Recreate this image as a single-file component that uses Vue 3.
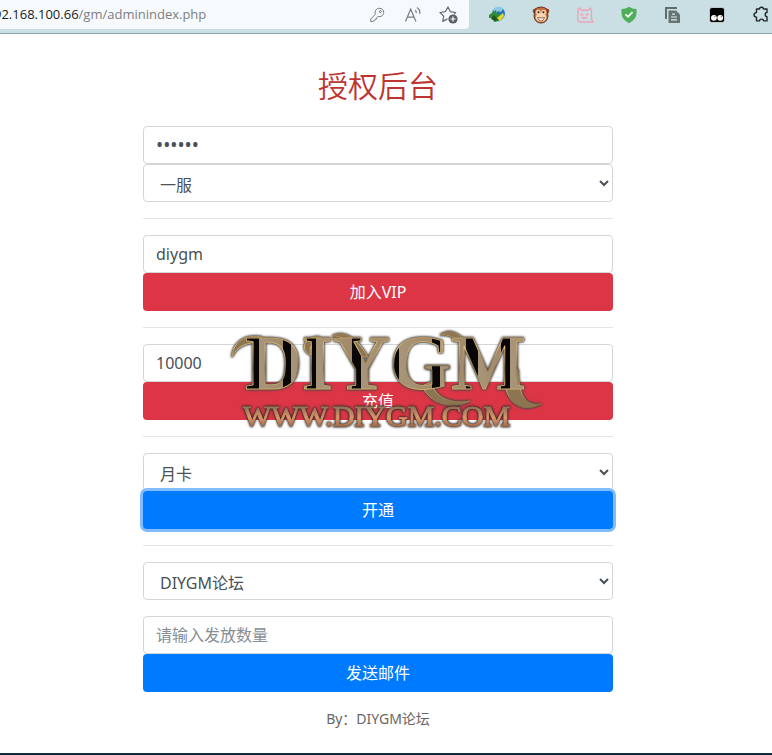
<template>
  <div class="window">
    <header class="toolbar">
      <div class="address">
        <a class="url" href="#"><span class="host">92.168.100.66</span>/gm/adminindex.php</a>
        <div class="tools">
          <button type="button" aria-label="密码">
            <svg width="16" height="16" viewBox="0 0 16 16" fill="none" stroke="#747b80">
              <path d="M6.300 7.300C5.500 4.200 7.200 1.300 10.200 1.300c2.700 0 4.500 1.700 4.500 4.200 0 3-2.800 4.700-5.700 3.900L7.800 10.700l-.2 1.300-1.500.2-.3 1.500-1.500.2-.5.600H1.700v-2.400z" />
              <circle cx="11.400" cy="4.600" r="1" />
            </svg>
          </button>
          <button type="button" aria-label="朗读">
            <svg width="18" height="18" viewBox="0 0 18 18" fill="none" stroke="#747b80" stroke-width="1.200">
              <path d="M1.500 15.500L6.700 3l5.200 12.500M3.300 11.200h6.800M11.200 4.200c1 .9 1.200 2 1 3M13 1.600c2.300 1.500 3.200 4 2.700 6.300" />
            </svg>
          </button>
          <button type="button" aria-label="收藏">
            <svg width="20" height="20" viewBox="0 0 20 20" fill="none">
              <path d="M8.500 13.900l-4.700 2.500.9-5.200L1 7.500l5.300-.8L9 2l2.400 4.700 5.300.8-1.700 1.700" stroke="#656c70" stroke-width="1.200" stroke-linejoin="round" />
              <circle cx="14" cy="14" r="4.600" fill="#596065" />
              <path d="M14 11.500v5M11.500 14h5" stroke="#fff" stroke-width="1.200" />
            </svg>
          </button>
        </div>
      </div>
      <nav class="extensions">
        <button type="button" aria-label="下载管理">
          <svg width="18" height="18" viewBox="0 0 18 18">
            <circle cx="10.500" cy="7.500" r="6.500" fill="#2673b8" />
            <path d="M5 4c3-4 8-4 10-1l-2 3-3-1-2 3z" fill="#8fc9e8" />
            <path d="M1 9l7-5 1 4 6 1c1 2-1 5-4 6l-5 1-1-4-4 0z" fill="#2f8d36" />
            <path d="M9 12l6-5 1 3-4 5z" fill="#e4d536" />
            <path d="M6 9l4 5-3 1-4-2z" fill="#25551f" />
          </svg>
        </button>
        <button type="button" aria-label="油猴">
          <svg width="18" height="18" viewBox="0 0 18 18">
            <circle cx="2.800" cy="5" r="2.200" fill="#9a4926" />
            <circle cx="15.200" cy="5" r="2.200" fill="#9a4926" />
            <path d="M3 3q6-4 12 0l1 7q-1 7-7 7t-7-7z" fill="#c56d3d" stroke="#69331f" />
            <circle cx="6.300" cy="6.300" r="2.500" fill="#f9cfaa" />
            <circle cx="11.700" cy="6.300" r="2.500" fill="#f9cfaa" />
            <ellipse cx="9" cy="11.500" rx="5.400" ry="4.200" fill="#f9d6b9" />
            <circle cx="6.500" cy="6.300" r="1" fill="#222" />
            <circle cx="11.500" cy="6.300" r="1" fill="#222" />
            <path d="M5.500 11.500q3.500 1 7 0-1 3.500-3.500 3.500t-3.500-3.500z" fill="#fff" stroke="#9a4926" stroke-width=".8" />
          </svg>
        </button>
        <button type="button" aria-label="小猫">
          <svg width="18" height="18" viewBox="0 0 18 18" fill="none" stroke="#eda4b7" stroke-width="1.400" stroke-linejoin="round" stroke-linecap="round">
            <path d="M2 8Q1.500 3 3.500 2L6 4.500q3-1 6 0L14.500 2Q16 4 15.500 8v5l1.500 3H5Q1.500 16 1.500 12z" />
            <path d="M4.800 9q1-1.400 2 0M10.200 9q1-1.400 2 0M6.500 11.500q1 1.400 2 0 1 1.400 2 0" />
          </svg>
        </button>
        <button type="button" aria-label="安全防护">
          <svg width="18" height="18" viewBox="0 0 18 18">
            <path d="M9 .8q3.500 2.400 7.500 2.200v5q-.6 5.500-7.500 9.200Q2.100 13.500 1.500 8V3Q5.500 3.200 9 .8z" fill="#4fae5a" />
            <path d="M5.500 8.300L8 10.800l4.500-4.700" fill="none" stroke="#fff" stroke-width="1.700" />
          </svg>
        </button>
        <button type="button" aria-label="复制文档">
          <svg width="18" height="18" viewBox="0 0 18 18">
            <path d="M1 1h12v2H3v10H1z" fill="#5f6d6d" />
            <path d="M4.500 4.500H12l4 4V17H4.500z" fill="#667474" />
            <path d="M8 8.200h3M7 11h6M7 13.800h6" stroke="#e0e9ea" stroke-width="1.200" />
          </svg>
        </button>
        <button type="button" aria-label="脚本管理">
          <svg width="18" height="18" viewBox="0 0 18 18">
            <rect x="1.500" y="1.500" width="15" height="15" rx="2.500" fill="#000" stroke="#fff" stroke-width=".6" />
            <circle cx="5.900" cy="11.800" r="2.900" fill="#fff" />
            <circle cx="12.200" cy="11.800" r="2.900" fill="#fff" />
            <circle cx="6.900" cy="10.800" r=".5" fill="#000" />
            <circle cx="13.200" cy="10.800" r=".5" fill="#000" />
          </svg>
        </button>
        <button type="button" aria-label="扩展">
          <svg width="18" height="18" viewBox="0 0 18 18" fill="none" stroke="#202426" stroke-width="1.400" stroke-linejoin="round">
            <path d="M4.500 3h3c0-2.400 4-2.400 4 0h3.500v3.500c-2.400 0-2.400 4.200 0 4.200v4.200h-3.400c0-2.400-4.100-2.400-4.100 0h-3v-3.800c-3.300 0-3.300-4.500 0-4.500z" />
          </svg>
        </button>
      </nav>
    </header>

    <main class="page">
      <form class="panel" @submit.prevent>
        <h1>授权后台</h1>

        <!-- 授权码与区服 -->
        <input v-model="form.code" class="control" type="password" aria-label="授权码" autocomplete="off">
        <select v-model="form.server" class="control" aria-label="区服">
          <option>一服</option>
        </select>
        <hr>

        <input v-model="form.account" class="control" type="text" aria-label="账号">
        <button class="btn btn-danger" type="button">加入VIP</button>
        <hr>

        <!-- 充值 -->
        <div class="recharge">
          <input v-model="form.amount" class="control" type="text" aria-label="充值数量">
          <button class="btn btn-danger" type="button">充值</button>
          <svg class="watermark" width="320" height="110" viewBox="0 0 320 110" aria-hidden="true">
            <defs>
              <!-- 左侧暗面、右侧石面交替 -->
              <linearGradient id="face" x1="0" y1="0" x2="320" y2="0" gradientUnits="userSpaceOnUse">
                <template v-for="band in bands" :key="band[0]">
                  <stop :offset="band[0] / 320" stop-color="#090705" />
                  <stop :offset="band[1] / 320" stop-color="#090705" />
                  <stop :offset="band[1] / 320" stop-color="#a8957a" />
                  <stop :offset="band[2] / 320" stop-color="#a08a6a" />
                </template>
              </linearGradient>
              <linearGradient id="gold" x1="0" y1="8" x2="0" y2="80" gradientUnits="userSpaceOnUse">
                <stop offset="0" stop-color="#a58350" />
                <stop offset=".2" stop-color="#e0bd7c" />
                <stop offset=".5" stop-color="#84704f" />
                <stop offset=".8" stop-color="#d0ad70" />
                <stop offset="1" stop-color="#8d7047" />
              </linearGradient>
              <linearGradient id="copper" x1="0" y1="84" x2="0" y2="103" gradientUnits="userSpaceOnUse">
                <stop offset="0" stop-color="#97765b" />
                <stop offset=".5" stop-color="#dc9669" />
                <stop offset="1" stop-color="#a16a48" />
              </linearGradient>
            </defs>
            <g class="brand">
              <path v-for="d in swashes" :key="d" :d="d" />
              <text x="17" y="65">DIYGM</text>
            </g>
            <text class="site" x="15" y="102">WWW.DIYGM.COM</text>
          </svg>
        </div>
        <hr>

        <select v-model="form.card" class="control" aria-label="会员卡">
          <option>月卡</option>
        </select>
        <button class="btn btn-primary active" type="button">开通</button>
        <hr>

        <!-- 邮件发放 -->
        <select v-model="form.item" class="control item" aria-label="物品">
          <option>DIYGM论坛</option>
        </select>
        <input v-model="form.count" class="control" type="text" placeholder="请输入发放数量" aria-label="发放数量">
        <button class="btn btn-primary" type="button">发送邮件</button>

        <p class="author">By：DIYGM论坛</p>
      </form>
    </main>
  </div>
</template>

<script setup>
import { reactive } from 'vue'

const form = reactive({
  code: '123456',
  server: '一服',
  account: 'diygm',
  amount: '10000',
  card: '月卡',
  item: 'DIYGM论坛',
  count: ''
})

// 每一笔：暗面起点、石面起点、石面终点
const bands = [
  [22, 31, 55],
  [55, 63, 79],
  [79, 88, 124],
  [124, 133, 163],
  [163, 171, 204],
  [204, 212, 238],
  [238, 250, 273],
  [273, 282, 320]
]

// 标志字母周围的花饰
const swashes = [
  'M34 13C18 10 5 17 4 33C9 22 19 18 34 18Z',
  'M92 13C76 11 71 27 83 31C80 24 84 18 94 17Z',
  'M104 12C114 7 127 10 140 33L132 33C122 16 114 12 104 12Z',
  'M212 11C224 3 235 10 254 36L241 32C231 15 224 10 212 11Z',
  'M203 58C207 74 223 80 242 77C230 84 205 85 194 62Z',
  'M290 45C291 71 296 82 313 80C297 88 279 84 276 55Z'
]
</script>

<style>
body {
  background: #fff;
}
</style>

<style scoped>
.window {
  display: flex;
  flex-direction: column;
  min-height: 100vh;
  box-sizing: border-box;
  border-bottom: 2px solid #102b3d;
  overflow: hidden;
  color: #495057;
  font-family: "Noto Sans", "Noto Sans CJK SC", sans-serif;
  font-size: 16px;
  line-height: 24px;
}

.toolbar {
  display: flex;
  height: 33px;
  background: #c9dfe3;
  border-bottom: 1px solid #8fa5ab;
}

.address {
  display: flex;
  flex: 1;
  min-width: 0;
  height: 29px;
  padding-right: 2px;
  box-sizing: border-box;
  overflow: hidden;
  background: #f6fafc;
  border-radius: 0 0 4px 0;
}

.url {
  flex: 1;
  margin-left: -6px;
  color: #7b8083;
  font-family: "Open Sans", sans-serif;
  font-size: 13px;
  line-height: 28px;
  text-decoration: none;
  white-space: nowrap;
}

.host {
  color: #202325;
}

.tools,
.extensions {
  display: flex;
}

.tools button,
.extensions button {
  display: flex;
  align-items: center;
  justify-content: center;
  width: 36px;
  height: 29px;
  padding: 0;
  border: 0;
  background: none;
}

.extensions {
  margin: 0 -11px 0 6px;
}

.extensions button {
  width: 44px;
}

.page {
  flex: 1;
  padding: 32px 32px 16px 16px;
}

.panel {
  max-width: 470px;
  margin: 0 auto;
}

h1 {
  margin: 0 0 20px;
  color: #bd3431;
  font-size: 30px;
  font-weight: 350;
  line-height: 40px;
  text-align: center;
}

hr {
  margin: 16px 0;
  border: 0;
  border-top: 1px solid #e5e5e5;
}

.control {
  display: block;
  width: 100%;
  height: 38px;
  padding: 6px 12px;
  box-sizing: border-box;
  border: 1px solid #d3d6d9;
  border-radius: 4px;
  outline: 0;
  background: #fff;
  color: #495057;
  font: inherit;
}

.control[type="password"] {
  font-size: 19px;
}

select.control {
  padding: 8px 12px 4px;
}

.control::placeholder {
  color: #868e96;
  opacity: 1;
}

.item {
  margin-bottom: 16px;
}

.btn {
  display: block;
  width: 100%;
  height: 38px;
  padding: 6px 12px;
  border: 0;
  border-radius: 4px;
  color: #fff;
  font: inherit;
}

.btn-danger {
  background: #dc3545;
}

.btn-primary {
  background: #007bff;
}

.active {
  box-shadow: 0 0 0 3px #80bdff;
}

.recharge {
  position: relative;
}

.watermark {
  position: absolute;
  top: -20px;
  left: calc(50% - 150px);
  overflow: visible;
  pointer-events: none;
}

.brand {
  fill: url(#face);
  stroke: url(#gold);
  stroke-width: 1px;
  stroke-linejoin: round;
  font-family: "Liberation Serif", serif;
  font-size: 79px;
  font-weight: 700;
  filter: drop-shadow(0 0 1px #40382f) drop-shadow(0 0 1px #555);
}

.brand path {
  fill: #8b7552;
}

.site {
  fill: url(#copper);
  stroke: url(#copper);
  stroke-width: 1px;
  font-family: "Liberation Serif", serif;
  font-size: 30px;
  filter: drop-shadow(0 0 1px #2f2822) drop-shadow(0 0 1px #3a322c);
}

.author {
  margin: 16px 0 0;
  color: #666;
  font-size: 14px;
  line-height: 21px;
  text-align: center;
}
</style>
